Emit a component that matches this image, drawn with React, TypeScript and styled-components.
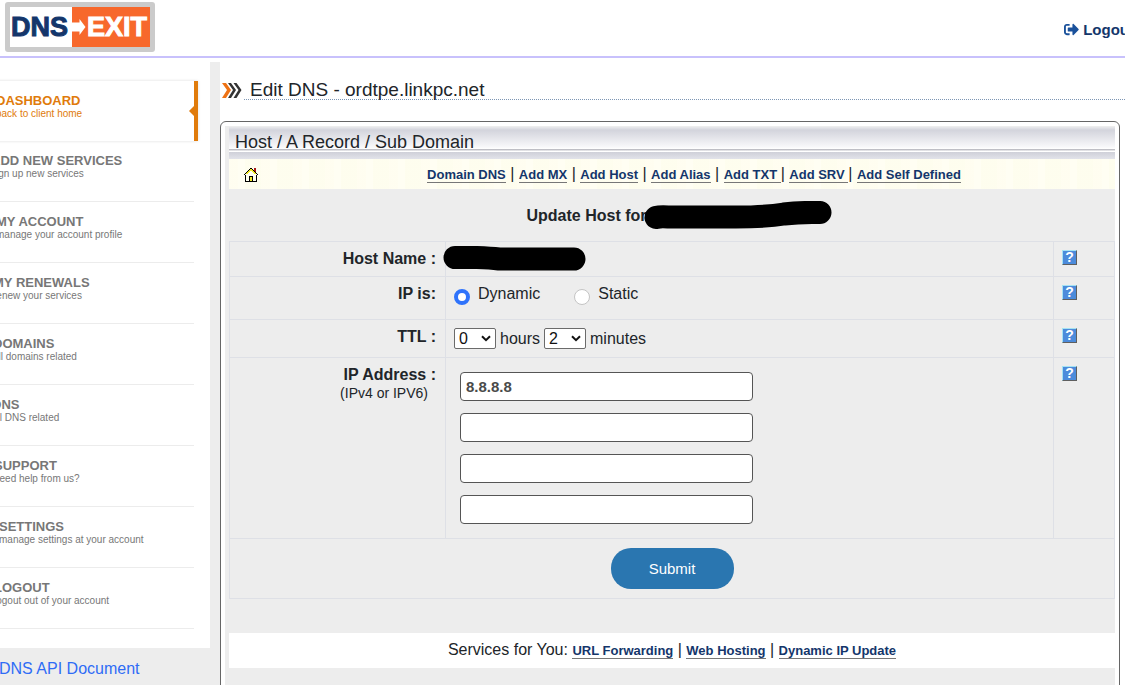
import React from "react";
import styled, { createGlobalStyle } from "styled-components";
import { FaSignOutAlt } from "react-icons/fa";

const navy = "#14366b";
const line = "#dee0e6";
const gray = "#ededed";

const GlobalStyle = createGlobalStyle`
  *, *::before, *::after { box-sizing: border-box; }
  body {
    margin: 0;
    overflow: hidden;
    background: #fff;
    color: #212529;
    font: 16px/24px "Liberation Sans", Arial, sans-serif;
  }
`;

const Header = styled.header`
  display: flex;
  justify-content: space-between;
  align-items: center;
  height: 58px;
  padding-left: 5px;
  padding-bottom: 2px;
  border-bottom: 2px solid #c8c1fc;
`;

const LogoLink = styled.a`
  display: flex;
`;

const LogoutLink = styled.a`
  display: flex;
  align-items: center;
  gap: 4px;
  margin-right: -9px;
  padding-top: 5px;
  color: ${navy};
  font-size: 15px;
  font-weight: bold;
  text-decoration: none;

  svg { color: #1a519b; }
`;

const Layout = styled.div`
  display: grid;
  grid-template-columns: 210px minmax(0, 1fr);
  column-gap: 10px;
  margin-top: 4px;
  background: ${gray};
`;

const Nav = styled.nav`
  padding: 19px 16px 19px 0;
  background: #fff;
`;

const NavItem = styled.a<{ $active?: boolean }>`
  position: relative;
  display: flex;
  height: ${(p) => (p.$active ? 60 : 61)}px;
  margin-left: -40px;
  margin-right: ${(p) => (p.$active ? -4 : 0)}px;
  padding-top: 12px;
  color: ${(p) => (p.$active ? "#e07b0b" : "#777")};
  text-decoration: none;
  white-space: nowrap;
  border-bottom: ${(p) => (p.$active ? "none" : "1px solid #ececec")};
  border-right: ${(p) => (p.$active ? "4px solid #e07b0b" : "none")};
  box-shadow: ${(p) => (p.$active ? "0 0 3px #ddd" : "none")};

  &::after {
    content: "";
    display: ${(p) => (p.$active ? "block" : "none")};
    position: absolute;
    right: 0;
    top: 25px;
    border: 5px solid transparent;
    border-left: 0;
    border-right-color: #e07b0b;
  }
`;

const NavIconSlot = styled.span<{ $width: number }>`
  flex: none;
  width: ${(p) => p.$width}px;
`;

const NavTitle = styled.strong`
  display: block;
  font-size: 13px;
  line-height: 16px;
`;

const NavHint = styled.span`
  display: block;
  font-size: 10px;
  line-height: 10px;
`;

const ApiLink = styled.a`
  display: block;
  padding: 9px 0 8px;
  margin-left: -1px;
  color: #2f6cf6;
  text-decoration: none;
  white-space: nowrap;
`;

const Content = styled.main`
  padding-top: 14px;
  background: #fff;
`;

const TitleRow = styled.div`
  display: flex;
  align-items: flex-end;
  height: 24px;
  gap: 2px;
  padding-left: 2px;
`;

const PageTitle = styled.h1`
  flex: 1;
  margin: 0;
  padding-left: 6px;
  font-size: 19px;
  line-height: 18px;
  font-weight: normal;
  border-bottom: 1px dotted #7d96b4;
`;

const Panel = styled.section`
  margin: 21px 5px 0 0;
  padding: 4px;
  border: 1px solid #666;
  border-radius: 6px;
`;

const PanelBody = styled.div`
  padding: 1px 0 40px 4px;
  background: ${gray};
`;

const PanelTitle = styled.h2`
  margin: 0;
  height: 25px;
  padding: 3px 0 0 6px;
  font-size: 18px;
  line-height: 24px;
  font-weight: normal;
  background: linear-gradient(#e9e9ec 0, #d3d4dc 3px, #f8f8fa 20px, #fff 22px, #b9b9c0 22px, #c4c4ca 23px, #fff 24px);
`;

const Band = styled.div`
  height: 7px;
  background: linear-gradient(#cfd0d8, #e2e3ea);
`;

const Toolbar = styled.nav`
  display: flex;
  align-items: center;
  height: 30px;
  background:
    repeating-linear-gradient(90deg, #fffceb55 0 9px, #fffde800 9px 16px, #fcfce555 16px 32px),
    #fffef3;
`;

const HomeLink = styled.a`
  display: flex;
  width: 44px;
  padding-left: 15px;
`;

const Links = styled.div`
  flex: 1;
  text-align: center;
  white-space: nowrap;
`;

const TextLink = styled.a`
  color: ${navy};
  font-size: 13px;
  font-weight: bold;
  text-decoration: none;
  white-space: pre;
  border-bottom: 1px solid #777;
`;

const FormTitle = styled.h3`
  display: flex;
  justify-content: center;
  height: 52px;
  margin: 0;
  padding-top: 12px;
  font-size: 16px;
  line-height: 30px;

  svg { margin: 0 -14px 0 -3px; }
`;

const FormTable = styled.table`
  width: 100%;
  table-layout: fixed;
  border-collapse: collapse;

  th, td {
    padding: 5px 8px 3px;
    vertical-align: top;
    border: 1px solid ${line};
  }
  th {
    padding-right: 9px;
    text-align: right;
  }
`;

const Row = styled.tr<{ $height: number }>`
  height: ${(p) => p.$height}px;
`;

const LabelHint = styled.span`
  display: block;
  padding-right: 8px;
  font-size: 14px;
  line-height: 12px;
  font-weight: normal;
`;

const HostCell = styled.td`
  svg { display: block; margin: -1px 0 0 -11px; }
`;

const Choices = styled.div`
  display: flex;
  gap: 34px;
`;

const Choice = styled.label`
  display: flex;
  gap: 8px;
`;

const Radio = styled.input`
  appearance: none;
  width: 16px;
  height: 16px;
  margin: 7px 0 0;
  background: #fff;
  border: 1px solid #c4c4c4;
  border-radius: 50%;

  &:checked { border: 4px solid #2f73fb; }
`;

const Duration = styled.div`
  display: flex;
  align-items: center;
  gap: 4px;
  padding-top: 2px;
`;

const SelectWrap = styled.span`
  position: relative;
  display: flex;
  margin-bottom: 2px;

  svg {
    position: absolute;
    right: 5px;
    top: 7px;
    pointer-events: none;
  }
`;

const Select = styled.select`
  appearance: none;
  width: 42px;
  height: 21px;
  padding: 0 4px;
  color: #111;
  background: #fff;
  border: 1px solid #6b6b6b;
  border-radius: 2px;
  font: 16px/19px "Liberation Sans", Arial, sans-serif;
`;

const AddressList = styled.div`
  display: grid;
  gap: 12px;
  padding: 9px 0 0 6px;
`;

const AddressInput = styled.input`
  width: 293px;
  height: 29px;
  padding: 0 5px;
  color: #4a4a4a;
  background: #fff;
  border: 1px solid #555;
  border-radius: 4px;
  font: bold 15px "Liberation Sans", Arial, sans-serif;
`;

const HelpButton = styled.button`
  display: block;
  width: 15px;
  height: 15px;
  margin-top: 3px;
  padding: 0;
  color: #fff;
  background: #4c8bdb;
  border: 1px solid;
  border-color: #a5e2f3 #5f5f5f #5f5f5f #a5e2f3;
  font: bold 14px/13px "Liberation Sans", Arial, sans-serif;
`;

const SubmitCell = styled.td`
  text-align: center;
`;

const SubmitButton = styled.button`
  width: 123px;
  height: 41px;
  margin-top: 4px;
  color: #fff;
  background: #2a76b0;
  border: 0;
  border-radius: 20px;
  font: 15px "Liberation Sans", Arial, sans-serif;
`;

const Services = styled.div`
  height: 35px;
  margin-top: 34px;
  padding-top: 5px;
  text-align: center;
  white-space: nowrap;
  background: #fff;
`;

const navItems = [
  { title: "DASHBOARD", hint: "back to client home", icon: 36, active: true },
  { title: "ADD NEW SERVICES", hint: "sign up new services", icon: 31 },
  { title: "MY ACCOUNT", hint: "manage your account profile", icon: 36 },
  { title: "MY RENEWALS", hint: "renew your services", icon: 33 },
  { title: "DOMAINS", hint: "all domains related", icon: 33 },
  { title: "DNS", hint: "all DNS related", icon: 32 },
  { title: "SUPPORT", hint: "need help from us?", icon: 34 },
  { title: "SETTINGS", hint: "manage settings at your account", icon: 39 },
  { title: "LOGOUT", hint: "logout out of your account", icon: 34 },
];

const records = ["Domain DNS", "Add MX", "Add Host", "Add Alias", "Add TXT ", "Add SRV ", "Add Self Defined"];
const services = ["URL Forwarding", "Web Hosting", "Dynamic IP Update"];

const Logo = () => (
  <svg width="150" height="50" viewBox="0 0 150 50" role="img" aria-label="DNS Exit">
    <rect width="150" height="50" rx="3" fill="#cbcbcb" />
    <rect x="5" y="5" width="62" height="40" fill="#fff" />
    <rect x="67" y="5" width="78" height="40" fill="#f7682c" />
    <g fontFamily="Liberation Sans, Arial, sans-serif" fontWeight="bold" fontSize="27" strokeWidth="1">
      <text x="6" y="34" fill={navy} stroke={navy}>DNS</text>
      <text x="82" y="34" fill="#fff" stroke="#fff">EXIT</text>
    </g>
    <path d="M67 20.500h7.500v-3.500l6 8-6 8v-3.500h-7.500z" fill="#fff" />
  </svg>
);

const Chevrons = () => (
  <svg width="20" height="17" viewBox="0 0 20 17" aria-hidden="true">
    <path d="M0 0h4l5 7-5 8h-4l5-8z" fill="#ee7214" />
    <path d="M6 0h3l5 7-5 8h-3l5-8z M11.500 0h3l5 7-5 8h-3l5-8z" fill="#333" />
  </svg>
);

const HomeIcon = () => (
  <svg width="14" height="15" viewBox="0 0 14 15" shapeRendering="crispEdges" aria-hidden="true">
    <path d="M2 7 7 2l5 5v7H2z" fill="#fffff0" />
    <path d="M2 6h1v-1h1v-1h1v-1h1v-1h2v1h1v1h1v1h1v1h1v1h-2v-1h-1v-1h-1v-1h-2v1h-1v1h-1v1h-2z" fill="#f4ec2a" />
    <path d="M0 7h1v-1h1v-1h1v-1h1v-1h1v-1h1v-1h2v1h1v1h1v1h1v1h1v1h1v1h1v1h-1v-1h-1v-1h-1v-1h-1v-1h-1v-1h-1v-1h-2v1h-1v1h-1v1h-1v1h-1v1h-1v1h-1z M1 8h1v6h10v-6h1v7h-12z M5 9h4v5h-1v-4h-2v4h-1z" fill="#000" />
    <path d="M6 10h2v4h-2z" fill="#f4ec2a" />
    <path d="M10 1h2v4h-1v-1h-1z" fill="#a51717" />
  </svg>
);

const Caret = () => (
  <svg width="10" height="7" viewBox="0 0 10 7" aria-hidden="true">
    <path d="M1 1.200 5 5.200l4-4" fill="none" stroke="#111" strokeWidth="2" />
  </svg>
);

const Help = ({ topic }: { topic: string }) => (
  <td>
    <HelpButton type="button" aria-label={`Help: ${topic}`}>?</HelpButton>
  </td>
);

const LinkList = ({ items }: { items: string[] }) => (
  <>
    {items.map((item, i) => (
      <React.Fragment key={item}>
        {i > 0 && (items[i - 1].endsWith(" ") ? "| " : " | ")}
        <TextLink href="#">{item}</TextLink>
      </React.Fragment>
    ))}
  </>
);

const TimeSelect = ({ label, value }: { label: string; value: string }) => (
  <SelectWrap>
    <Select aria-label={label} defaultValue={value}>
      {["0", "1", "2", "3", "4", "5"].map((n) => (
        <option key={n}>{n}</option>
      ))}
    </Select>
    <Caret />
  </SelectWrap>
);

export default function App() {
  return (
    <>
      <GlobalStyle />
      <Header>
        <LogoLink href="#"><Logo /></LogoLink>
        <LogoutLink href="#"><FaSignOutAlt size={15} />Logout</LogoutLink>
      </Header>
      <Layout>
        <aside>
          <Nav>
            {navItems.map((item) => (
              <NavItem key={item.title} href="#" $active={item.active}>
                <NavIconSlot $width={item.icon} />
                <span>
                  <NavTitle>{item.title}</NavTitle>
                  <NavHint>{item.hint}</NavHint>
                </span>
              </NavItem>
            ))}
          </Nav>
          <ApiLink href="#">DNS API Document</ApiLink>
        </aside>
        <Content>
          <TitleRow>
            <Chevrons />
            <PageTitle>Edit DNS - ordtpe.linkpc.net</PageTitle>
          </TitleRow>
          <Panel>
            <PanelBody>
              <PanelTitle>Host / A Record / Sub Domain</PanelTitle>
              <Band />
              <Toolbar>
                <HomeLink href="#" aria-label="Home"><HomeIcon /></HomeLink>
                <Links><LinkList items={records} /></Links>
              </Toolbar>
              <form onSubmit={(e) => e.preventDefault()}>
                <FormTitle>
                  Update Host for
                  <svg width="188" height="29" viewBox="0 0 188 29" aria-hidden="true">
                    <path d="M12 16.500Q16 15.500 24 16H92Q122 16 140 13Q156 11 176 11.500" fill="none" stroke="#000" strokeWidth="23" strokeLinecap="round" />
                  </svg>
                </FormTitle>
                <FormTable>
                  <colgroup>
                    <col style={{ width: 216 }} />
                    <col />
                    <col style={{ width: 61 }} />
                  </colgroup>
                  <tbody>
                    <Row $height={35}>
                      <th scope="row">Host Name :</th>
                      <HostCell>
                        <svg width="143" height="25" viewBox="0 0 143 25" aria-hidden="true">
                          <path d="M12 11.500H34Q48 12 56 13H131" fill="none" stroke="#000" strokeWidth="23" strokeLinecap="round" strokeLinejoin="round" />
                        </svg>
                      </HostCell>
                      <Help topic="Host Name" />
                    </Row>
                    <Row $height={43}>
                      <th scope="row">IP is:</th>
                      <td>
                        <Choices>
                          <Choice><Radio type="radio" name="ipType" defaultChecked />Dynamic</Choice>
                          <Choice><Radio type="radio" name="ipType" />Static</Choice>
                        </Choices>
                      </td>
                      <Help topic="IP type" />
                    </Row>
                    <Row $height={38}>
                      <th scope="row">TTL :</th>
                      <td>
                        <Duration>
                          <TimeSelect label="TTL hours" value="0" />
                          hours
                          <TimeSelect label="TTL minutes" value="2" />
                          minutes
                        </Duration>
                      </td>
                      <Help topic="TTL" />
                    </Row>
                    <Row $height={181}>
                      <th scope="row">
                        IP Address :
                        <LabelHint>(IPv4 or IPV6)</LabelHint>
                      </th>
                      <td>
                        <AddressList>
                          {["8.8.8.8", "", "", ""].map((ip, i) => (
                            <AddressInput key={i} type="text" aria-label={`IP Address ${i + 1}`} defaultValue={ip} />
                          ))}
                        </AddressList>
                      </td>
                      <Help topic="IP Address" />
                    </Row>
                    <Row $height={60}>
                      <SubmitCell colSpan={3}>
                        <SubmitButton type="submit">Submit</SubmitButton>
                      </SubmitCell>
                    </Row>
                  </tbody>
                </FormTable>
              </form>
              <Services>
                Services for You: <LinkList items={services} />
              </Services>
            </PanelBody>
          </Panel>
        </Content>
      </Layout>
    </>
  );
}
